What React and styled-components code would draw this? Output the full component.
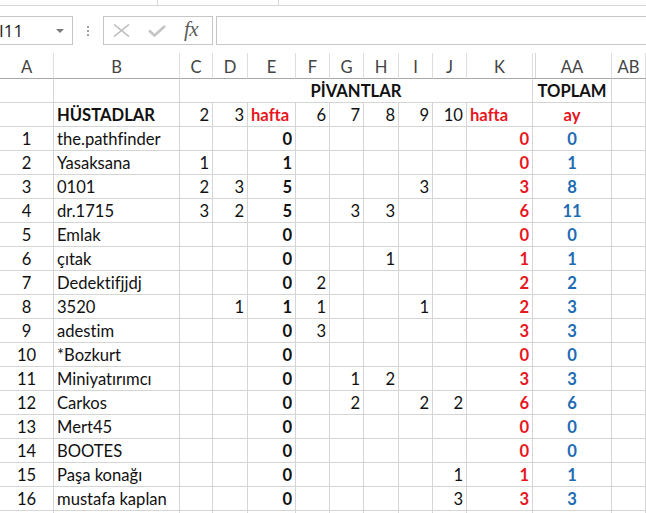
import React from 'react';
import styled, { createGlobalStyle } from 'styled-components';

const Global = createGlobalStyle`
  html, body { margin: 0; padding: 0; background: #fff; overflow: hidden; }
  body { font-family: Lato, "Noto Sans", sans-serif; font-variant-ligatures: none; }
  * { box-sizing: border-box; }
`;

const RED = '#e8161e';
const BLUE = '#1d6bb2';
const GRID = '#d5d5d5';

const Page = styled.div`
  width: 646px;
  height: 513px;
  overflow: hidden;
  background: #fff;
`;

const TopStrip = styled.div`
  display: flex;
  height: 6px;
  border-bottom: 1px solid #d6d6d6;
`;

const StripSeg = styled.div`
  flex: ${p => (p.$w ? `0 0 ${p.$w}px` : '1')};
  border-right: ${p => (p.$w ? '1px solid #d9d9d9' : 'none')};
`;

const FormulaBar = styled.div`
  display: flex;
  height: 29px;
  margin-top: 10px;
`;

const NameBox = styled.div`
  flex: 0 0 81px;
  margin-left: -8px;
  border: 1px solid #c6c6c6;
  display: flex;
  align-items: center;
  justify-content: space-between;
  padding: 0 8px 0 6px;
  font-family: "Open Sans", "Noto Sans", sans-serif;
  font-size: 17px;
  color: #222;
`;

const Arrow = styled.span`
  width: 0;
  height: 0;
  border-left: 4px solid transparent;
  border-right: 4px solid transparent;
  border-top: 4px solid #7a7a7a;
  margin-top: 1px;
`;

const Grip = styled.div`
  flex: 0 0 30px;
  display: flex;
  flex-direction: column;
  align-items: center;
  justify-content: center;
  gap: 2px;
`;

const Dot = styled.span`
  width: 2px;
  height: 2px;
  background: #a0a0a0;
`;

const FxBox = styled.div`
  flex: 0 0 110px;
  border: 1px solid #c6c6c6;
  display: flex;
  align-items: center;
  padding-left: 9px;
  gap: 18px;
`;

const Fx = styled.span`
  font-family: "Liberation Serif", "DejaVu Serif", serif;
  font-style: italic;
  font-size: 21px;
  color: #5c5c5c;
  margin-top: -3px;
  letter-spacing: -0.5px;
`;

const FormulaInput = styled.div`
  flex: 1;
  margin-left: 3px;
  margin-right: -6px;
  border: 1px solid #c6c6c6;
`;

const COLS = [54, 126, 33, 35, 48, 34, 34, 35, 34, 34, 66, 79, 34, 60];

const Sheet = styled.div`
  margin-top: 8px;
  display: grid;
  grid-template-columns: ${COLS.map(c => `${c}px`).join(' ')};
  grid-template-rows: 26px;
  grid-auto-rows: 24px;
  font-size: 16.6px;
`;

const ColHead = styled.div`
  border-right: 1px solid #dedede;
  border-bottom: 1px solid #a8a8a8;
  display: flex;
  align-items: center;
  justify-content: center;
  padding-top: 3px;
  color: #444;
  font-size: 16.6px;
  box-shadow: ${p => (p.$hidden ? 'inset 2px 0 0 #fff, inset 3px 0 0 #d8d8d8' : 'none')};
`;

const Cell = styled.div`
  grid-column: span ${p => p.$span || 1};
  border-right: 1px solid ${GRID};
  border-bottom: 1px solid ${GRID};
  padding: 1px 3px 0 3px;
  line-height: 22px;
  white-space: nowrap;
  text-align: ${p => p.$align || 'left'};
  font-weight: ${p => (p.$bold ? 700 : 400)};
  color: ${p => p.$color || '#111'};
`;

const headers = ['A', 'B', 'C', 'D', 'E', 'F', 'G', 'H', 'I', 'J', 'K', 'AA', 'AB', ''];

const data = [
  ['the.pathfinder', {}, 0, 0, 0],
  ['Yasaksana', { C: 1 }, 1, 0, 1],
  ['0101', { C: 2, D: 3, I: 3 }, 5, 3, 8],
  ['dr.1715', { C: 3, D: 2, G: 3, H: 3 }, 5, 6, 11],
  ['Emlak', {}, 0, 0, 0],
  ['çıtak', { H: 1 }, 0, 1, 1],
  ['Dedektifjjdj', { F: 2 }, 0, 2, 2],
  ['3520', { D: 1, F: 1, I: 1 }, 1, 2, 3],
  ['adestim', { F: 3 }, 0, 3, 3],
  ['*Bozkurt', {}, 0, 0, 0],
  ['Miniyatırımcı', { G: 1, H: 2 }, 0, 3, 3],
  ['Carkos', { G: 2, I: 2, J: 2 }, 0, 6, 6],
  ['Mert45', {}, 0, 0, 0],
  ['BOOTES', {}, 0, 0, 0],
  ['Paşa konağı', { J: 1 }, 0, 1, 1],
  ['mustafa kaplan', { J: 3 }, 0, 3, 3],
];

const XIcon = () => (
  <svg width="17" height="13" viewBox="0 0 17 13">
    <path d="M1 0.5 L16 12.5 M16 0.5 L1 12.5" stroke="#bdbdbd" strokeWidth="1.6" fill="none" />
  </svg>
);

const CheckIcon = () => (
  <svg width="18" height="12" viewBox="0 0 18 12">
    <path d="M1 5.5 L6.5 10.5 L17 1" stroke="#c4c4c4" strokeWidth="2.6" fill="none" />
  </svg>
);

export default function App() {
  return (
    <Page>
      <Global />
      <TopStrip>
        <StripSeg $w={158} />
        <StripSeg $w={121} />
        <StripSeg />
      </TopStrip>
      <FormulaBar>
        <NameBox>
          <span>I11</span>
          <Arrow />
        </NameBox>
        <Grip>
          <Dot />
          <Dot />
          <Dot />
        </Grip>
        <FxBox>
          <XIcon />
          <CheckIcon />
          <Fx>fx</Fx>
        </FxBox>
        <FormulaInput />
      </FormulaBar>
      <Sheet>
        {headers.map((h, i) => (
          <ColHead key={'h' + i} $hidden={h === 'AA'}>{h}</ColHead>
        ))}

        <Cell />
        <Cell />
        <Cell $span={9} $bold $align="center">PİVANTLAR</Cell>
        <Cell $bold $align="center">TOPLAM</Cell>
        <Cell />
        <Cell />

        <Cell />
        <Cell $bold>HÜSTADLAR</Cell>
        <Cell $align="right">2</Cell>
        <Cell $align="right">3</Cell>
        <Cell $bold $color={RED}>hafta</Cell>
        <Cell $align="right">6</Cell>
        <Cell $align="right">7</Cell>
        <Cell $align="right">8</Cell>
        <Cell $align="right">9</Cell>
        <Cell $align="right">10</Cell>
        <Cell $bold $color={RED}>hafta</Cell>
        <Cell $bold $align="center" $color={RED}>ay</Cell>
        <Cell />
        <Cell />

        {data.map(([name, vals, e, k, aa], i) => (
          <React.Fragment key={i}>
            <Cell $align="center">{i + 1}</Cell>
            <Cell>{name}</Cell>
            <Cell $align="right">{vals.C ?? ''}</Cell>
            <Cell $align="right">{vals.D ?? ''}</Cell>
            <Cell $align="right" $bold>{e}</Cell>
            <Cell $align="right">{vals.F ?? ''}</Cell>
            <Cell $align="right">{vals.G ?? ''}</Cell>
            <Cell $align="right">{vals.H ?? ''}</Cell>
            <Cell $align="right">{vals.I ?? ''}</Cell>
            <Cell $align="right">{vals.J ?? ''}</Cell>
            <Cell $align="right" $bold $color={RED}>{k}</Cell>
            <Cell $align="center" $bold $color={BLUE}>{aa}</Cell>
            <Cell />
            <Cell />
          </React.Fragment>
        ))}

        {COLS.map((_, i) => (
          <Cell key={'e' + i} />
        ))}
      </Sheet>
    </Page>
  );
}
